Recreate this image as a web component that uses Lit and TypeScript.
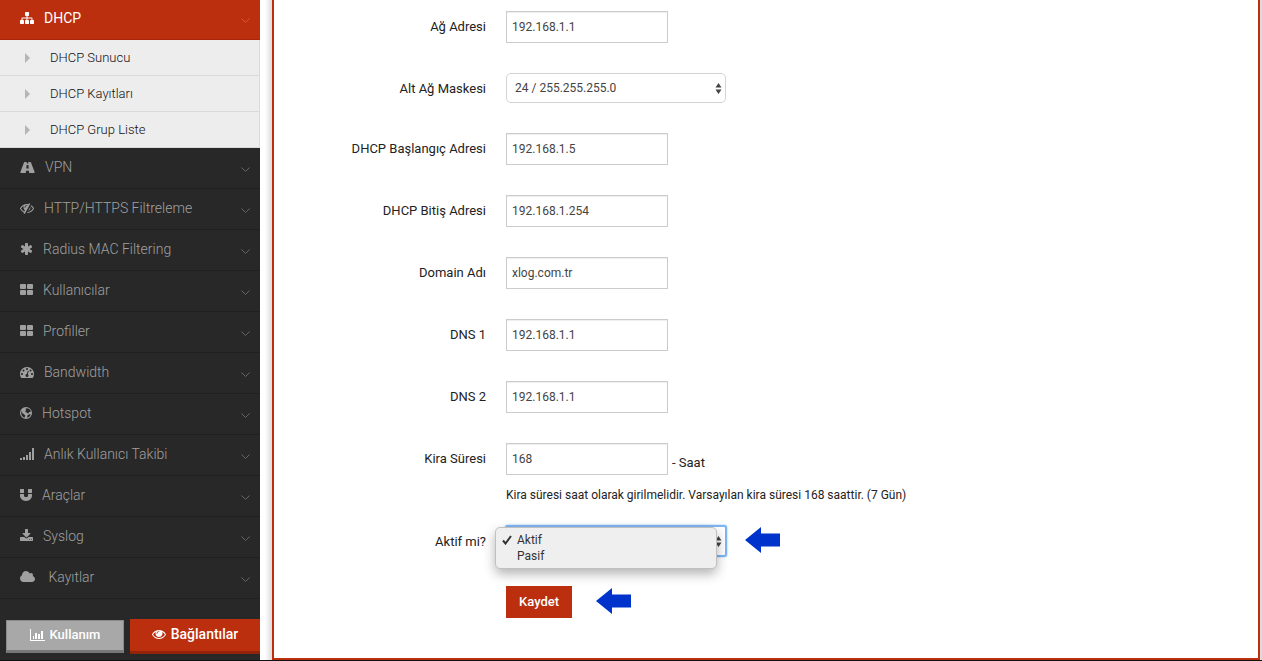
import { LitElement, html, svg, css } from "lit";
import { customElement, property, state } from "lit/decorators.js";
import { classMap } from "lit/directives/class-map.js";

interface Icon { width: number; box: string; shape: unknown; }

const ICONS: Record<string, Icon> = {
  sitemap: { width: 14, box: "0 0 1792 1792", shape: svg`<path d="M1792 1248v320q0 40-28 68t-68 28h-320q-40 0-68-28t-28-68v-320q0-40 28-68t68-28h96v-192h-512v192h96q40 0 68 28t28 68v320q0 40-28 68t-68 28h-320q-40 0-68-28t-28-68v-320q0-40 28-68t68-28h96v-192h-512v192h96q40 0 68 28t28 68v320q0 40-28 68t-68 28h-320q-40 0-68-28t-28-68v-320q0-40 28-68t68-28h96v-192q0-52 38-90t90-38h512v-192h-96q-40 0-68-28t-28-68v-320q0-40 28-68t68-28h320q40 0 68 28t28 68v320q0 40-28 68t-68 28h-96v192h512q52 0 90 38t38 90v192h96q40 0 68 28t28 68z"/>` },
  road: { width: 15, box: "0 0 15 14", shape: svg`<path fill-rule="evenodd" d="M4.500 2h2.300l-.1 1.600h1.600L8.200 2h2.300q.4 0 .5.400l3.600 9.600q.2 1-.4 1H9.200L9 10.800H6L5.800 13H.8q-.6 0-.4-1L4 2.400q.1-.4.5-.4zM6.600 5l-.3 3.500h2.400L8.400 5z"/>` },
  eyeSlash: { width: 14, box: "0 0 1792 1792", shape: svg`<path d="M555 1335l78-141q-87-63-136-159t-49-203q0-121 61-225-229 117-381 353 167 258 427 375zm389-759q0-20-14-34t-34-14q-125 0-214.500 89.500t-89.500 214.500q0 20 14 34t34 14 34-14 14-34q0-86 61-147t147-61q20 0 34-14t14-34zm363-191q0 7-1 9-106 189-316 567t-315 566l-49 89q-10 16-28 16-12 0-134-70-16-10-16-28 0-12 44-87-143-65-263.500-173t-208.500-245q-20-31-20-69t20-69q153-235 380-371t496-136q89 0 180 17l54-97q10-16 28-16 5 0 18 6t31 15.500 33 18.500 31.500 18.500 19.500 11.500q16 10 16 27zm37 447q0 139-79 253.500t-209 164.500l280-502q8 45 8 84zm448 128q0 35-20 69-39 64-109 145-150 172-347.500 267t-419.500 95l74-132q212-18 392.500-137t301.500-307q-115-179-282-294l63-112q95 64 182.500 153t144.500 184q20 34 20 69z"/>` },
  asterisk: { width: 13, box: "64 0 1664 1792", shape: svg`<path d="M1546 1050q46 26 59.500 77.500t-12.500 97.500l-64 110q-26 46-77.500 59.500t-97.500-12.500l-266-153v307q0 52-38 90t-90 38h-128q-52 0-90-38t-38-90v-307l-266 153q-46 26-97.500 12.500t-77.500-59.500l-64-110q-26-46-12.500-97.500t59.500-77.500l266-154-266-154q-46-26-59.500-77.500t12.500-97.500l64-110q26-46 77.500-59.500t97.500 12.500l266 153v-307q0-52 38-90t90-38h128q52 0 90 38t38 90v307l266-153q46-26 97.500-12.500t77.500 59.500l64 110q26 46 12.500 97.500t-59.500 77.500l-266 154z"/>` },
  tiles: { width: 13, box: "0 0 13 14", shape: svg`<rect y="1" width="6" height="5" rx="1"/><rect x="7" y="1" width="6" height="5" rx="1"/><rect y="7" width="6" height="5" rx="1"/><rect x="7" y="7" width="6" height="5" rx="1"/>` },
  gauge: { width: 14, box: "0 0 1792 1792", shape: svg`<path d="M384 1152q0-53-37.500-90.500t-90.500-37.500-90.500 37.500-37.500 90.500 37.500 90.500 90.500 37.500 90.500-37.500 37.500-90.500zm192-448q0-53-37.500-90.500t-90.500-37.500-90.500 37.500-37.500 90.500 37.500 90.500 90.500 37.500 90.500-37.500 37.500-90.500zm428 481l101-382q6-26-7.500-48.500t-38.500-29.500-48 6.500-30 39.500l-101 382q-60 5-107 43.500t-63 98.500q-20 77 20 146t117 89 146-20 89-117q16-60-6-117t-72-91zm660-33q0-53-37.500-90.500t-90.500-37.500-90.500 37.500-37.500 90.500 37.500 90.500 90.500 37.500 90.500-37.500 37.500-90.500zm-640-640q0-53-37.500-90.500t-90.500-37.500-90.500 37.500-37.500 90.500 37.500 90.500 90.500 37.500 90.500-37.500 37.500-90.500zm448 192q0-53-37.500-90.500t-90.500-37.500-90.500 37.500-37.500 90.500 37.500 90.500 90.500 37.500 90.500-37.500 37.500-90.500zm320 448q0 261-141 483-19 29-54 29h-1402q-35 0-54-29-141-221-141-483 0-182 71-348t191-286 286-191 348-71 348 71 286 191 191 286 71 348z"/>` },
  globe: { width: 12, box: "0 0 12 14", shape: svg`<path fill-rule="evenodd" d="M6 1a6 6 0 1 1 0 12A6 6 0 0 1 6 1zM6.500 2.300L5.300 3.200l1 .7-.9 1-.1 1.200 1.500.3.6.9 1 .2.6-1.300 1.900-.6C10.600 3.800 8.800 2.200 6.500 2.300zM9.300 8.200l-1.700 1.100-.7 2.500c1.800-.3 3.300-1.500 3.800-3.200zM2 4.500l-.8 2c-.2 2.400 1.300 4.500 3.300 5.200l.8-2.100-1.900-1.900L2.200 6.900z"/>` },
  signal: { width: 14, box: "0 0 14 14", shape: svg`<path d="M0 11h2v2H0zM3 10h2v3H3zM6 8h2v5H6zM9 5h2v8H9zM12 1h2v12h-2z"/>` },
  magnet: { width: 12, box: "128 0 1536 1792", shape: svg`<path d="M1664 832v128q0 201-98.500 362t-274 251.500-395.500 90.500-395.500-90.500-274-251.500-98.500-362v-128q0-26 19-45t45-19h384q26 0 45 19t19 45v128q0 52 23.500 90t53.500 57 71 30 64 13 44 2 44-2 64-13 71-30 53.500-57 23.500-90v-128q0-26 19-45t45-19h384q26 0 45 19t19 45zm-1024-640v384q0 26-19 45t-45 19h-384q-26 0-45-19t-19-45v-384q0-26 19-45t45-19h384q26 0 45 19t19 45zm1024 0v384q0 26-19 45t-45 19h-384q-26 0-45-19t-19-45v-384q0-26 19-45t45-19h384q26 0 45 19t19 45z"/>` },
  download: { width: 13, box: "64 0 1664 1792", shape: svg`<path d="M1344 1344q0-26-19-45t-45-19-45 19-19 45 19 45 45 19 45-19 19-45zm256 0q0-26-19-45t-45-19-45 19-19 45 19 45 45 19 45-19 19-45zm128-224v320q0 40-28 68t-68 28h-1472q-40 0-68-28t-28-68v-320q0-40 28-68t68-28h465l135 136q58 56 136 56t136-56l136-136h464q40 0 68 28t28 68zm-325-569q17 41-14 70l-448 448q-18 19-45 19t-45-19l-448-448q-31-29-14-70 17-39 59-39h256v-448q0-26 19-45t45-19h256q26 0 45 19t19 45v448h256q42 0 59 39z"/>` },
  cloud: { width: 15, box: "0 0 1920 1792", shape: svg`<path d="M1920 1152q0 159-112.500 271.500t-271.500 112.500h-1088q-185 0-316.500-131.500t-131.500-316.500q0-132 71-241.500t187-163.500q-2-28-2-43 0-212 150-362t362-150q158 0 286.500 88t187.500 230q70-62 166-62 106 0 181 75t75 181q0 75-41 138 129 30 213 134.500t84 239.500z"/>` },
  chart: { width: 15, box: "0 0 15 14", shape: svg`<path d="M0 1h1v11h14v1H0zM3 8h1v3H3zM5 5h2v6H5zM8 6h2v5H8zM11 3h2v8h-2z"/>` },
  eye: { width: 14, box: "0 0 1792 1792", shape: svg`<path d="M1664 960q-152-236-381-353 61 104 61 225 0 185-131.500 316.500t-316.500 131.500-316.500-131.500-131.500-316.500q0-121 61-225-229 117-381 353 133 205 333.500 326.500t434.500 121.500 434.500-121.500 333.500-326.500zm-720-384q0-20-14-34t-34-14q-125 0-214.500 89.500t-89.500 214.500q0 20 14 34t34 14 34-14 14-34q0-86 61-147t147-61q20 0 34-14t14-34zm848 384q0 34-20 69-140 230-376.500 368.500t-499.500 138.500-499.500-139-376.500-368q-20-35-20-69t20-69q140-229 376.500-368t499.500-139 499.500 139 376.500 368q20 35 20 69z"/>` },
};

const icon = (name: string) => {
  const i = ICONS[name];
  return html`<svg class="icon" width=${i.width} height="14" viewBox=${i.box} aria-hidden="true">${i.shape}</svg>`;
};

const MENU = [
  { icon: "road", label: "VPN" },
  { icon: "eyeSlash", label: "HTTP/HTTPS Filtreleme" },
  { icon: "asterisk", label: "Radius MAC Filtering" },
  { icon: "tiles", label: "Kullanıcılar" },
  { icon: "tiles", label: "Profiller" },
  { icon: "gauge", label: "Bandwidth" },
  { icon: "globe", label: "Hotspot" },
  { icon: "signal", label: "Anlık Kullanıcı Takibi" },
  { icon: "magnet", label: "Araçlar" },
  { icon: "download", label: "Syslog" },
  { icon: "cloud", label: "\u00a0Kayıtlar" },
];

@customElement("side-menu")
export class SideMenu extends LitElement {
  static styles = css`
    :host { display: flex; flex-direction: column; background: #282828; color: #a0a0a0; font: 300 14px/20px Roboto, sans-serif; }
    a { color: inherit; text-decoration: none; }
    ul { list-style: none; margin: 0; padding: 0; }
    .icon { fill: currentColor; flex: none; }
    .item { display: flex; align-items: center; gap: 10px; box-sizing: border-box; height: 41px; padding: 0 10px 2px 20px; border-bottom: 1px solid #202020; }
    .item.open { height: 40px; background: #bb2e0e; color: #fff; border-bottom-color: #a82609; font-weight: 400; padding-bottom: 3px; }
    .label { flex: 1; white-space: pre; }
    .chevron { fill: none; stroke: #666; margin-top: 6px; }
    .open .chevron { stroke: #d3583c; }
    .sub a { display: flex; align-items: center; gap: 19px; box-sizing: border-box; height: 36px; padding: 1px 0 0 25px; background: #ededed; border-bottom: 1px solid #dadada; border-right: 1px solid #dadada; color: #111; font-size: 13px; }
    .caret { fill: #b5b5b5; }
    .actions { display: grid; grid-template-columns: 118fr 130fr; align-items: center; gap: 6px; padding: 20px 0 6px 6px; }
    button { display: flex; align-items: center; justify-content: center; gap: 5px; box-sizing: border-box; margin: 0; border: 0; padding: 0 0 2px; color: #fff; font: 500 14px/20px Roboto, sans-serif; }
    .usage { height: 33px; background: #a8a8a8; border: 1px solid #8a8a8a; border-bottom: 3px solid #777; font-size: 13px; }
    .links { height: 35px; background: #bb2e0e; border-bottom: 3px solid #932409; }
  `;

  private chevron() {
    return html`<svg class="chevron" width="9" height="6" viewBox="0 0 9 6" aria-hidden="true"><path d="M.5.5l4 4 4-4" /></svg>`;
  }

  render() {
    return html`
      <nav>
        <a class="item open" href="#dhcp">${icon("sitemap")}<span class="label">DHCP</span>${this.chevron()}</a>
        <ul class="sub">
          ${["DHCP Sunucu", "DHCP Kayıtları", "DHCP Grup Liste"].map((t) => html`
            <li><a href="#dhcp"><svg class="caret" width="6" height="10" viewBox="0 0 6 10" aria-hidden="true"><path d="M0 0l5 5-5 5z" /></svg>${t}</a></li>`)}
        </ul>
        <ul>
          ${MENU.map((m) => html`<li><a class="item" href="#menu">${icon(m.icon)}<span class="label">${m.label}</span>${this.chevron()}</a></li>`)}
        </ul>
      </nav>
      <div class="actions">
        <button class="usage" type="button">${icon("chart")}Kullanım</button>
        <button class="links" type="button">${icon("eye")}Bağlantılar</button>
      </div>
    `;
  }
}

@customElement("dhcp-form")
export class DhcpForm extends LitElement {
  @property({ type: Boolean }) menuOpen = true;
  @state() private active = "Aktif";

  static styles = css`
    :host { display: block; color: #222; font: 400 13px/20px Roboto, sans-serif; }
    .group { display: grid; grid-template-columns: 212px minmax(0, 1fr); column-gap: 20px; margin-bottom: 30px; }
    .group.noted { margin-bottom: 21px; }
    .group.last { margin-bottom: 0; }
    .name { padding-top: 6px; height: 20px; text-align: right; }
    .field { display: flex; align-items: center; gap: 4px; }
    input { box-sizing: border-box; width: 162px; height: 32px; margin: 0; padding: 0 5px; border: 1px solid #ccc; border-radius: 0; background: #fff; color: #444; font: 400 12px/20px Roboto, sans-serif; box-shadow: inset 0 1px 1px #eee; }
    .picker { position: relative; width: 220px; }
    select { appearance: none; display: block; box-sizing: border-box; width: 100%; height: 30px; margin: 0; padding: 0 24px 0 8px; border: 1px solid #d4d4d4; border-radius: 5px; background: #fff; color: #444; font: 400 12px/20px Roboto, sans-serif; }
    .picker.focused select { border-color: #7fb5f0; border-radius: 2px; box-shadow: 0 0 0 1px #7db6f5, 0 0 2px 1px #7db6f5; }
    .steps { position: absolute; right: 4px; top: 10px; fill: #444; pointer-events: none; }
    .unit { padding-top: 8px; }
    .note { margin: 10px 0 0; font-size: 12px; }
    .options { position: absolute; z-index: 1; left: -11px; top: 1px; box-sizing: border-box; width: 222px; margin: 0; padding: 4px 0; list-style: none; background: #efefef; border: 1px solid #c0c0c0; border-radius: 5px; box-shadow: 0 5px 12px rgba(0, 0, 0, 0.3); color: #333; font-size: 12px; line-height: 16px; }
    .option { display: flex; align-items: center; gap: 5px; padding-left: 6px; }
    .tick { fill: none; stroke: #333; stroke-width: 2; visibility: hidden; }
    .chosen .tick { visibility: visible; }
    .arrow { fill: #0033cc; }
    .marked { gap: 19px; }
    .marked.save { gap: 24px; }
    button { height: 32px; margin: 0; padding: 0 13px; border: 0; background: #bb2e0e; color: #fff; font: 500 13px/20px Roboto, sans-serif; }
  `;

  private text(id: string, label: string, value: string) {
    return html`<div class="group"><label class="name" for=${id}>${label}</label><div class="field"><input id=${id} type="text" .value=${value} /></div></div>`;
  }

  private steps() {
    return html`<svg class="steps" width="7" height="11" viewBox="0 0 7 11" aria-hidden="true"><path d="M3.500 0L6.500 4.500H.5zM.5 6.500h6l-3 4.500z" /></svg>`;
  }

  private arrow() {
    return html`<svg class="arrow" width="35" height="28" viewBox="0 0 35 28" aria-hidden="true"><path d="M0 13L16 0V6.500h19v13H16V26z" /></svg>`;
  }

  render() {
    return html`
      <form>
        ${this.text("network", "Ağ Adresi", "192.168.1.1")}
        <div class="group">
          <label class="name" for="mask">Alt Ağ Maskesi</label>
          <div class="field"><div class="picker"><select id="mask"><option>24 / 255.255.255.0</option></select>${this.steps()}</div></div>
        </div>
        ${this.text("start", "DHCP Başlangıç Adresi", "192.168.1.5")}
        ${this.text("end", "DHCP Bitiş Adresi", "192.168.1.254")}
        ${this.text("domain", "Domain Adı", "xlog.com.tr")}
        ${this.text("dns1", "DNS 1", "192.168.1.1")}
        ${this.text("dns2", "DNS 2", "192.168.1.1")}
        <div class="group noted">
          <label class="name" for="lease">Kira Süresi</label>
          <div>
            <div class="field"><input id="lease" type="text" .value=${"168"} /><span class="unit">- Saat</span></div>
            <p class="note">Kira süresi saat olarak girilmelidir. Varsayılan kira süresi 168 saattir. (7 Gün)</p>
          </div>
        </div>
        <div class="group">
          <label class="name" for="active">Aktif mi?</label>
          <div class="field marked">
            <div class=${classMap({ picker: true, focused: this.menuOpen })}>
              <select id="active"><option></option></select>${this.steps()}
              <ul class="options" role="listbox" aria-label="Aktif mi?" ?hidden=${!this.menuOpen}>
                ${["Aktif", "Pasif"].map((o) => html`
                  <li class=${classMap({ option: true, chosen: o === this.active })} role="option" aria-selected=${o === this.active} @click=${() => (this.active = o)}>
                    <svg class="tick" width="10" height="10" viewBox="0 0 10 10" aria-hidden="true"><path d="M1 5.500L3.500 8.500 9 1" /></svg>${o}
                  </li>`)}
              </ul>
            </div>
            ${this.arrow()}
          </div>
        </div>
        <div class="group last">
          <span></span>
          <div class="field marked save"><button type="button">Kaydet</button>${this.arrow()}</div>
        </div>
      </form>
    `;
  }
}

@customElement("app-root")
export class AppRoot extends LitElement {
  static styles = css`
    :host { display: block; min-height: 100vh; background: #111; }
    .page { display: grid; grid-template-columns: 260px minmax(0, 1fr); background: #fff; }
    .content { padding: 0 2px 0 12px; background: linear-gradient(to right, #fff 5px, #dcdcdc 12px, #dcdcdc); }
    .panel { padding: 11px 12px 40px 0; background: #fff; border: 2px solid #bb2e0e; border-top: 0; }
  `;

  render() {
    return html`
      <div class="page">
        <side-menu></side-menu>
        <main class="content"><div class="panel"><dhcp-form></dhcp-form></div></main>
      </div>
    `;
  }
}
